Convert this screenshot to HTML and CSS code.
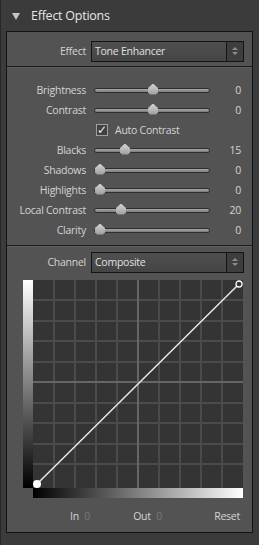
FILE: index.html
```html
<!DOCTYPE html>
<html lang="en">
<head>
  <meta charset="UTF-8" />
  <title>Effect Options</title>
  <link rel="stylesheet" href="styles.css">
</head>
<body>

  <div class="panel">

    <div class="panel-head">
      <span class="twisty"></span>
      <span class="panel-title">Effect Options</span>
    </div>

    <div class="panel-body">

      <!-- Effect -->
      <div class="section sec-effect">
        <div class="pick-row">
          <span class="lbl">Effect</span>
          <div class="select">
            <span class="select-text">Tone Enhancer</span>
            <span class="select-btn"><i class="up"></i><i class="down"></i></span>
          </div>
        </div>
      </div>

      <!-- Slider -->
      <div class="section sec-sliders">
        <div class="row">
          <span class="lbl">Brightness</span>
          <div class="track"><span class="knob" style="left:58px"></span></div>
          <span class="val">0</span>
        </div>
        <div class="row">
          <span class="lbl">Contrast</span>
          <div class="track"><span class="knob" style="left:58px"></span></div>
          <span class="val">0</span>
        </div>
        <div class="row">
          <span class="lbl"></span>
          <label class="check"><span class="box">&#10003;</span>Auto Contrast</label>
          <span class="val"></span>
        </div>
        <div class="row">
          <span class="lbl">Blacks</span>
          <div class="track"><span class="knob" style="left:30px"></span></div>
          <span class="val">15</span>
        </div>
        <div class="row">
          <span class="lbl">Shadows</span>
          <div class="track"><span class="knob" style="left:5px"></span></div>
          <span class="val">0</span>
        </div>
        <div class="row">
          <span class="lbl">Highlights</span>
          <div class="track"><span class="knob" style="left:5px"></span></div>
          <span class="val">0</span>
        </div>
        <div class="row">
          <span class="lbl">Local Contrast</span>
          <div class="track"><span class="knob" style="left:26px"></span></div>
          <span class="val">20</span>
        </div>
        <div class="row">
          <span class="lbl">Clarity</span>
          <div class="track"><span class="knob" style="left:5px"></span></div>
          <span class="val">0</span>
        </div>
      </div>

      <!-- Kurve -->
      <div class="section sec-curve">
        <div class="pick-row">
          <span class="lbl">Channel</span>
          <div class="select">
            <span class="select-text">Composite</span>
            <span class="select-btn"><i class="up"></i><i class="down"></i></span>
          </div>
        </div>

        <div class="curve">
          <div class="vbar"></div>
          <svg class="grid" width="210" height="208" viewBox="0 0 210 208">
            <rect width="210" height="208" fill="#343434"/>
            <g stroke="#4b4b4b" stroke-width="2">
              <line x1="21" y1="0" x2="21" y2="208"/>
              <line x1="42" y1="0" x2="42" y2="208"/>
              <line x1="63" y1="0" x2="63" y2="208"/>
              <line x1="84" y1="0" x2="84" y2="208"/>
              <line x1="126" y1="0" x2="126" y2="208"/>
              <line x1="147" y1="0" x2="147" y2="208"/>
              <line x1="168" y1="0" x2="168" y2="208"/>
              <line x1="189" y1="0" x2="189" y2="208"/>
              <line x1="0" y1="20" x2="210" y2="20"/>
              <line x1="0" y1="41" x2="210" y2="41"/>
              <line x1="0" y1="61" x2="210" y2="61"/>
              <line x1="0" y1="82" x2="210" y2="82"/>
              <line x1="0" y1="123" x2="210" y2="123"/>
              <line x1="0" y1="143" x2="210" y2="143"/>
              <line x1="0" y1="164" x2="210" y2="164"/>
              <line x1="0" y1="184" x2="210" y2="184"/>
            </g>
            <g stroke="#666" stroke-width="2">
              <line x1="105" y1="0" x2="105" y2="208"/>
              <line x1="0" y1="102" x2="210" y2="102"/>
            </g>
            <line x1="4" y1="204" x2="206" y2="4" stroke="#e8e8e8" stroke-width="1.5"/>
            <circle cx="206" cy="4" r="3" fill="#343434" stroke="#fff" stroke-width="1.3"/>
          </svg>
          <div class="hbar"></div>
          <span class="dot"></span>
        </div>

        <div class="io-row">
          <span class="io">In <b>0</b></span>
          <span class="io">Out <b>0</b></span>
          <span class="reset">Reset</span>
        </div>
      </div>

    </div>
  </div>

</body>
</html>
```

FILE: styles.css
```css
body {
  margin: 0;
  background: #3a3a3a;
  font-family: 'Open Sans', 'Noto Sans', sans-serif;
  font-size: 10.5px;
  letter-spacing: -0.25px;
  color: #d4d4d4;
}
.panel {
  width: 259px;
  height: 545px;
  box-sizing: border-box;
  border-left: 1px solid #262626;
  background: #3b3b3b;
}

/* Kopfzeile */
.panel-head {
  height: 31px;
  display: flex;
  align-items: center;
  padding-left: 11px;
}
.twisty {
  width: 0;
  height: 0;
  border-left: 4px solid transparent;
  border-right: 4px solid transparent;
  border-top: 7px solid #c4c4c4;
  margin-top: 1px;
}
.panel-title {
  font-size: 12.5px;
  color: #e6e6e6;
  margin-left: 11px;
}

/* innerer Kasten */
.panel-body {
  margin: 0 6px 0 5px;
  height: 500px;
  border: 1px solid #141414;
  background: #535353;
}
.section {
  border-bottom: 1px solid #1c1c1c;
  box-shadow: 0 1px 0 #5e5e5e;
}
.sec-effect {
  height: 33px;
  padding-top: 1px;
}
.sec-sliders {
  box-sizing: border-box;
  height: 179px;
  padding-top: 13px;
}
.sec-curve {
  border-bottom: none;
  box-shadow: none;
  padding-top: 6px;
}

.lbl {
  width: 79px;
  text-align: right;
  flex-shrink: 0;
}

/* Auswahlfeld */
.pick-row {
  display: flex;
  align-items: center;
  height: 20px;
  margin-top: 8px;
}
.sec-curve .pick-row {
  margin-top: 0;
}
.select {
  margin-left: 5px;
  width: 153px;
  height: 21px;
  box-sizing: border-box;
  border: 1px solid #141414;
  background: linear-gradient(#4f4f4f, #454545);
  display: flex;
  color: #e0e0e0;
}
.select-text {
  flex: 1;
  padding-left: 3px;
  line-height: 19px;
}
.select-btn {
  width: 16px;
  border-left: 1px solid #141414;
  background: #3e3e3e;
  display: flex;
  flex-direction: column;
  align-items: center;
  justify-content: center;
  gap: 2px;
}
.select-btn i {
  width: 0;
  height: 0;
  border-left: 3px solid transparent;
  border-right: 3px solid transparent;
}
.select-btn .up { border-bottom: 3px solid #8c8c8c; }
.select-btn .down { border-top: 3px solid #8c8c8c; }

/* Schieberegler */
.row {
  display: flex;
  align-items: center;
  height: 20px;
}
.track {
  position: relative;
  margin-left: 8px;
  width: 114px;
  height: 3px;
  border: 1px solid #2e2e2e;
  border-radius: 3px;
  background: linear-gradient(#a8a8a8, #7c7c7c);
}
.knob {
  position: absolute;
  top: -5px;
  margin-left: -5px;
  width: 10px;
  height: 11px;
  background: linear-gradient(#d4d4d4, #9c9c9c);
  clip-path: polygon(50% 0, 100% 40%, 100% 80%, 80% 100%, 20% 100%, 0 80%, 0 40%);
}
.val {
  width: 30px;
  text-align: right;
  flex-shrink: 0;
  margin-left: auto;
  margin-right: 11px;
}
.check {
  display: flex;
  align-items: center;
  margin-left: 10px;
}
.box {
  width: 10px;
  height: 10px;
  border: 1px solid #a0a0a0;
  background: #404040;
  color: #f4f4f4;
  font-size: 12px;
  font-weight: bold;
  line-height: 10px;
  text-align: center;
  margin-right: 7px;
  font-family: 'DejaVu Sans', sans-serif;
}

/* Kurve */
.curve {
  position: relative;
  margin: 8px 0 0 16px;
  height: 218px;
}
.vbar {
  position: absolute;
  left: 0;
  top: 0;
  width: 10px;
  height: 208px;
  background: linear-gradient(#fff, #000);
}
.grid {
  position: absolute;
  left: 10px;
  top: 0;
}
.hbar {
  position: absolute;
  left: 10px;
  top: 208px;
  width: 210px;
  height: 10px;
  background: linear-gradient(to right, #000, #fff);
}
.dot {
  position: absolute;
  left: 10px;
  top: 200px;
  width: 8px;
  height: 8px;
  border-radius: 50%;
  background: #fff;
}

.io-row {
  display: flex;
  align-items: center;
  height: 20px;
  margin-top: 8px;
  padding-left: 63px;
}
.io b {
  font-weight: normal;
  color: #787878;
  margin-left: 3px;
}
.io + .io {
  margin-left: 43px;
}
.reset {
  margin-left: auto;
  margin-right: 12px;
}
```
